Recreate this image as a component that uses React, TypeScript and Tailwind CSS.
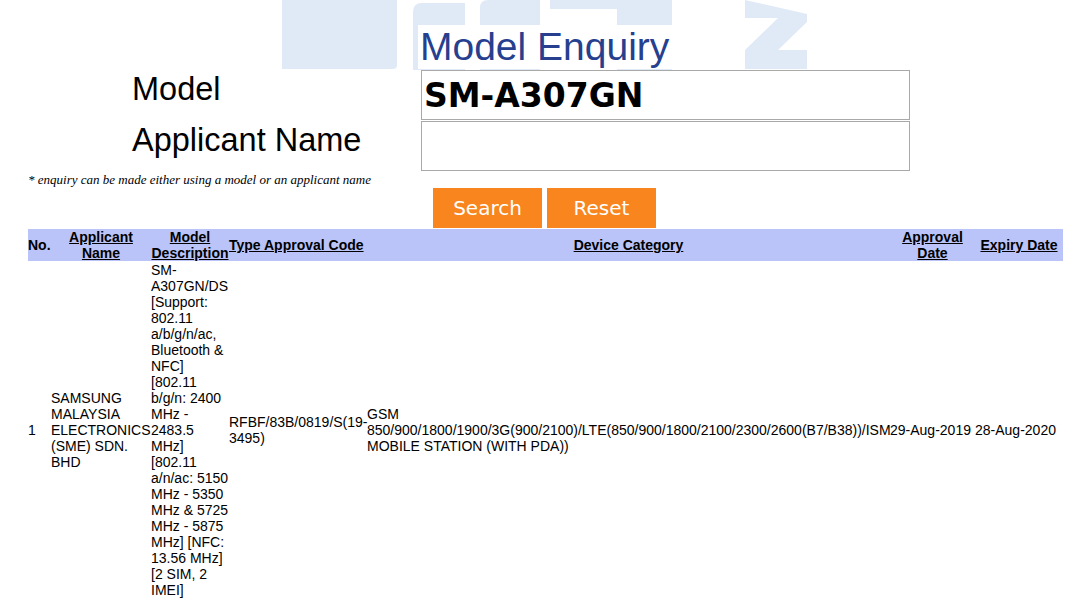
const MODEL_DESC =
  'SM-A307GN/DS [Support: 802.11 a/b/g/n/ac, Bluetooth & NFC] [802.11 b/g/n: 2400 MHz - 2483.5 MHz] [802.11 a/n/ac: 5150 MHz - 5350 MHz & 5725 MHz - 5875 MHz] [NFC: 13.56 MHz] [2 SIM, 2 IMEI]';

const DEVICE_CAT =
  'GSM 850/900/1800/1900/3G(900/2100)/LTE(850/900/1800/2100/2300/2600(B7/B38))/ISM MOBILE STATION (WITH PDA))';

function Watermark() {
  // faded logo behind the page title
  return (
    <svg className="absolute inset-0" width="1085" height="70" viewBox="0 0 1085 70">
      <g fill="#e0eaf6">
        <path d="M282 0 H397 V65 Q397 69 393 69 H282 Z" />
        <path d="M413 12 Q413 3 422 3 H465 V70 H413 Z" />
        <path d="M480 8 Q480 0 488 0 H540 V70 H480 Z" />
        <path d="M550 0 H672 V70 H617 V9 H550 Z" />
        <path d="M745 0 L807 14 V22 L778 50 H807 V69 H745 V50 L778 18 H745 Z" />
      </g>
    </svg>
  );
}

export default function App() {
  return (
    <div className="w-[1085px] h-[608px] overflow-hidden bg-white text-black font-['Liberation_Sans',Arial,sans-serif]">
      {/* Заголовок */}
      <div className="relative h-[70px]">
        <Watermark />
        <div className="relative pt-[25px]">
          <h1 className="ml-[418px] w-[254px] h-[44px] bg-white px-[2px] text-[39px] leading-[44px] text-[#263f8f]">
            Model Enquiry
          </h1>
        </div>
      </div>

      {/* Форма */}
      <div className="flex">
        <div className="w-[421px] pl-[132px] pt-[1px] text-[32.5px] leading-[37px]">Model</div>
        <input
          readOnly
          value="SM-A307GN"
          className="w-[489px] h-[50px] border border-[#a9a9a9] px-[2px] text-[33px] font-bold text-black outline-none font-['DejaVu_Sans',Verdana,sans-serif]"
        />
      </div>
      <div className="flex mt-[1px]">
        <div className="w-[421px] pl-[132px] pt-[1px] text-[32.5px] leading-[37px]">Applicant Name</div>
        <input
          readOnly
          value=""
          className="w-[489px] h-[50px] border border-[#a9a9a9] px-[2px] text-[33px] outline-none"
        />
      </div>
      <p className="mt-[1px] pl-[28px] text-[13px] leading-[16px] italic font-['Liberation_Serif','Times_New_Roman',serif]">
        * enquiry can be made either using a model or an applicant name
      </p>

      <div className="flex gap-[5px] pl-[433px]">
        <button className="w-[109px] h-[40px] bg-[#f8851d] text-white text-[20px] font-['DejaVu_Sans',Verdana,sans-serif]">
          Search
        </button>
        <button className="w-[109px] h-[40px] bg-[#f8851d] text-white text-[20px] font-['DejaVu_Sans',Verdana,sans-serif]">
          Reset
        </button>
      </div>

      {/* Результаты */}
      <table className="mt-px ml-[28px] w-[1035px] table-fixed border-collapse text-[14px] leading-[16px]">
        <colgroup>
          <col className="w-[23px]" />
          <col className="w-[100px]" />
          <col className="w-[78px]" />
          <col className="w-[138px]" />
          <col className="w-[523px]" />
          <col className="w-[85px]" />
          <col className="w-[88px]" />
        </colgroup>
        <thead>
          <tr className="bg-[#bac4f8] font-bold">
            <th className="p-0 align-middle text-left">No.</th>
            <th className="p-0 align-middle"><a className="underline">Applicant Name</a></th>
            <th className="p-0 align-middle"><a className="underline">Model Description</a></th>
            <th className="p-0 align-middle whitespace-nowrap text-left"><a className="underline">Type Approval Code</a></th>
            <th className="p-0 align-middle"><a className="underline">Device Category</a></th>
            <th className="p-0 align-middle"><a className="underline">Approval Date</a></th>
            <th className="p-0 align-middle whitespace-nowrap"><a className="underline">Expiry Date</a></th>
          </tr>
        </thead>
        <tbody>
          <tr>
            <td className="px-0 pt-[1px] align-middle">1</td>
            <td className="px-0 pt-[1px] align-middle">SAMSUNG MALAYSIA ELECTRONICS (SME) SDN. BHD</td>
            <td className="px-0 pt-[1px] align-middle">{MODEL_DESC}</td>
            <td className="px-0 pt-[1px] align-middle">RFBF/83B/0819/S(19-3495)</td>
            <td className="px-0 pt-[1px] align-middle">{DEVICE_CAT}</td>
            <td className="px-0 pt-[1px] align-middle">29-Aug-2019</td>
            <td className="px-0 pt-[1px] align-middle">28-Aug-2020</td>
          </tr>
        </tbody>
      </table>
    </div>
  );
}
